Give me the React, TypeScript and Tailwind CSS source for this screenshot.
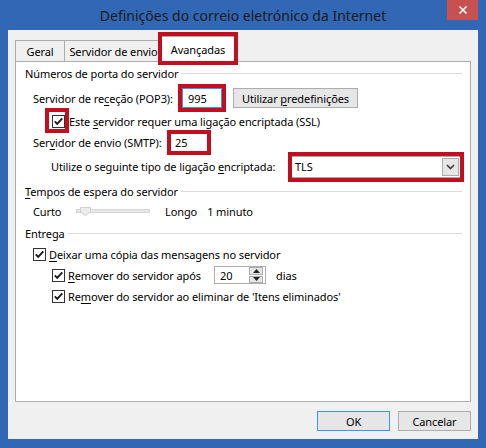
import React from "react";

function Check() {
  return (
    <span className="w-[13px] h-[13px] border border-[#333333] bg-white flex items-center justify-center shrink-0">
      <svg width="11" height="11" viewBox="0 0 11 11">
        <path d="M1.8 5.4 L4.2 7.9 L9.3 2.4" fill="none" stroke="#1a1a1a" strokeWidth="1.9" />
      </svg>
    </span>
  );
}

function RedBox({ cls }: { cls: string }) {
  return <span className={"absolute border-4 border-[#c10f1f] pointer-events-none " + cls} />;
}

function Header({ children, h }: { children: React.ReactNode; h: string }) {
  return (
    <div className={"flex items-center " + h}>
      <span>{children}</span>
      <span className="flex-1 h-px bg-[#dcdcdc] ml-[3px]" />
    </div>
  );
}

function U({ children }: { children: React.ReactNode }) {
  return <span className="underline underline-offset-[2px] decoration-1">{children}</span>;
}

export default function App() {
  return (
    <div className="w-[486px] h-[448px] bg-[#3167b4] flex flex-col font-['Segoe_UI','Noto_Sans',sans-serif] text-[11px] tracking-[-0.1px] text-black leading-none whitespace-nowrap">
      <div className="h-[30px] relative flex items-center justify-center shrink-0">
        <span className="text-[14px] tracking-normal text-[#1b1b1b] mt-[1px]">Definições do correio eletrónico da Internet</span>
        <div className="absolute right-[8px] top-0 w-[31px] h-[20px] bg-[#c75050] flex items-center justify-center">
          <svg width="10" height="10" viewBox="0 0 10 10">
            <path d="M1.5 1.5 L8.5 8.5 M8.5 1.5 L1.5 8.5" stroke="#ffffff" strokeWidth="1.6" />
          </svg>
        </div>
      </div>
      <div className="mx-[8px] mb-[9px] flex-1 bg-[#f0f0f0] flex flex-col px-[7px]">
        <div className="h-[31px] flex items-end shrink-0">
          <div className="w-[49px] h-[21px] border-l border-t border-[#acacac] flex items-center justify-center">Geral</div>
          <div className="w-[99px] h-[21px] border-l border-t border-r border-[#acacac] flex items-center justify-center">Servidor de envio</div>
          <div className="relative z-10 ml-[-2px] w-[74px] h-[26px] mb-[-1px] bg-white border-l border-t border-r border-[#acacac] flex items-center justify-center pb-[1px]">
            <span>Avançadas</span>
            <RedBox cls="left-[-4px] right-[-4px] top-[-5px] bottom-[-3px]" />
          </div>
        </div>
        <div className="h-[341px] bg-white border border-[#adadad] flex flex-col pl-[9px] pr-[8px]">
          <Header h="h-[23px]">Números de porta do servidor</Header>
          <div className="h-[26px] flex items-center pl-[8px]">
            <span className="w-[149px]">Servidor de re<U>c</U>eção (POP3):</span>
            <div className="relative w-[40px] h-[20px] border border-[#3399ff] bg-white flex items-center pl-[5px]">
              <span>995</span>
              <RedBox cls="inset-[-5px]" />
            </div>
            <div className="ml-[11px] w-[125px] h-[20px] border border-[#acacac] bg-[#e6e6e6] flex items-center justify-center">
              <span>
                Utilizar <U>p</U>redefinições
              </span>
            </div>
          </div>
          <div className="h-[20px] flex items-center pl-[27px]">
            <span className="relative">
              <Check />
              <RedBox cls="left-[-7px] right-[-4px] top-[-7px] bottom-[-5px]" />
            </span>
            <span className="ml-[4px]">
              Este <U>s</U>ervidor requer uma ligação encriptada (SSL)
            </span>
          </div>
          <div className="h-[22px] flex items-center pl-[8px]">
            <span className="w-[137px]">
              Ser<U>v</U>idor de envio (SMTP):
            </span>
            <div className="relative w-[38px] h-[19px] border border-[#abadb3] bg-white flex items-center pl-[4px]">
              <span>25</span>
              <RedBox cls="inset-[-4px]" />
            </div>
          </div>
          <div className="h-[27px] flex items-center pl-[26px]">
            <span className="w-[240px]">
              Utilize o seguinte tipo de ligação <U>e</U>ncriptada:
            </span>
            <div className="relative w-[170px] h-[22px] border border-[#a9a9a9] bg-white flex items-center pl-[3px]">
              <span className="flex-1">TLS</span>
              <span className="w-[17px] h-[18px] mr-[1px] border border-[#acacac] bg-[#e6e6e6] flex items-center justify-center">
                <svg width="9" height="6" viewBox="0 0 9 6">
                  <path d="M1 1 L4.5 4.5 L8 1" fill="none" stroke="#404040" strokeWidth="1.6" />
                </svg>
              </span>
              <RedBox cls="left-[-4px] right-[-4px] top-[-5px] bottom-[-5px]" />
            </div>
          </div>
          <Header h="h-[22px]">
            <U>T</U>empos de espera do servidor
          </Header>
          <div className="h-[18px] flex items-center pl-[8px]">
            <span className="w-[43px]">Curto</span>
            <div className="relative w-[74px] h-[4px] bg-[#e7e7e7] border border-[#d6d6d6]">
              <svg className="absolute left-[3px] top-[-3px]" width="11" height="9" viewBox="0 0 11 9">
                <path d="M0.5 0.5 H10.5 V5 L5.5 8.5 L0.5 5 Z" fill="#ececec" stroke="#d0d0d0" />
              </svg>
            </div>
            <span className="ml-[15px]">Longo</span>
            <span className="ml-[10px]">1 minuto</span>
          </div>
          <Header h="h-[26px]">Entrega</Header>
          <div className="h-[16px] flex items-center pl-[8px]">
            <Check />
            <span className="ml-[3px]">
              <U>D</U>eixar uma cópia das mensagens no servidor
            </span>
          </div>
          <div className="h-[26px] flex items-center pl-[27px]">
            <Check />
            <span className="ml-[3px] w-[146px]">
              <U>R</U>emover do servidor após
            </span>
            <div className="w-[52px] h-[18px] border border-[#abadb3] bg-white flex items-center pl-[5px]">
              <span className="flex-1">20</span>
              <span className="w-[14px] h-[16px] mr-[2px] flex flex-col gap-px">
                <span className="flex-1 border border-[#acacac] bg-[#e6e6e6] flex items-center justify-center">
                  <svg width="7" height="4" viewBox="0 0 7 4"><path d="M0 4 L3.5 0 L7 4 Z" fill="#222" /></svg>
                </span>
                <span className="flex-1 border border-[#acacac] bg-[#e6e6e6] flex items-center justify-center">
                  <svg width="7" height="4" viewBox="0 0 7 4"><path d="M0 0 L3.5 4 L7 0 Z" fill="#222" /></svg>
                </span>
              </span>
            </div>
            <span className="ml-[10px]">dias</span>
          </div>
          <div className="h-[16px] flex items-center pl-[27px]">
            <Check />
            <span className="ml-[3px]">
              Re<U>m</U>over do servidor ao eliminar de 'Itens eliminados'
            </span>
          </div>
        </div>
        <div className="flex-1 flex justify-end items-start pt-[9px] gap-[8px]">
          <div className="w-[73px] h-[20px] border border-[#3399ff] bg-[#e6e6e6] flex items-center justify-center">OK</div>
          <div className="w-[73px] h-[20px] border border-[#acacac] bg-[#e6e6e6] flex items-center justify-center">Cancelar</div>
        </div>
      </div>
    </div>
  );
}
